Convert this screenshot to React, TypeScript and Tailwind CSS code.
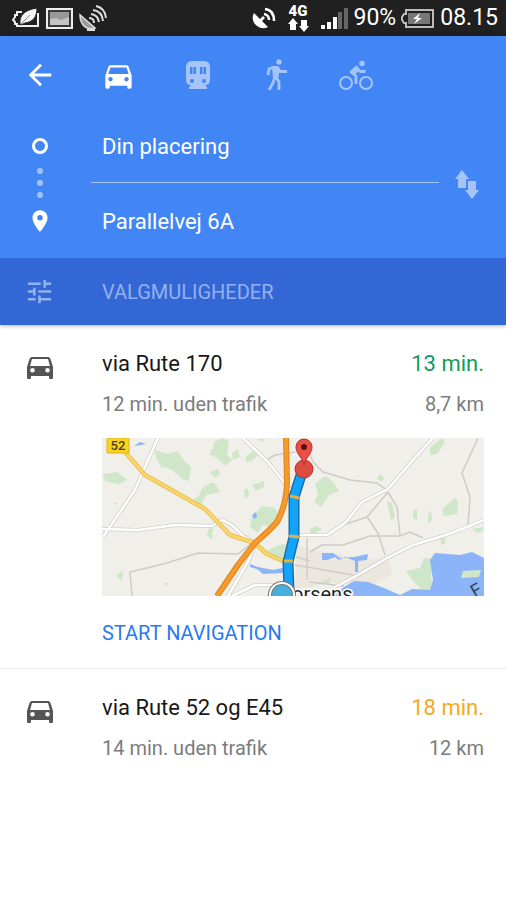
import type { ReactNode } from 'react'
import { MdArrowBack, MdDirectionsCar, MdPlace, MdTune } from 'react-icons/md'

function StatusBar() {
  return (
    <div className="flex h-9 items-center justify-between bg-[#202020] pl-3 pr-2 text-white">
      <div className="flex items-center gap-1.5">
        {/* Power saver */}
        <svg viewBox="0 0 28 22" className="h-[22px] w-7" fill="none" aria-hidden="true">
          <path d="M10 5H5v3H3v2L1 13l2 2v2h2v2h21V6" stroke="#eee" strokeWidth="2" />
          <path d="M8 17C7 9 12 3 25 1c0 9-4 14-12 15l-4 2z" fill="#f2f2f2" stroke="#202020" />
          <path d="M9 17l9-9" stroke="#888" />
        </svg>
        {/* Screenshot saved */}
        <svg viewBox="0 0 27 21" className="h-[21px] w-[27px]" aria-hidden="true">
          <rect x="1" y="1" width="25" height="19" fill="#3a3a3a" stroke="#eee" strokeWidth="2" />
          <rect x="4" y="4" width="19" height="13" fill="#999" />
          <path d="M4 11l6-1 5 2 8-3v8H4z" fill="#c4c4c4" />
        </svg>
        <svg viewBox="0 0 28 28" className="size-7" fill="none" aria-hidden="true">
          <path d="M1 11c0 10 7 16 15 13z" fill="#999" stroke="#ddd" strokeWidth="1.500" />
          <path d="M8 26h8" stroke="#ddd" strokeWidth="2" />
          <path d="M10 14q5 0 5 5M12 10q7 1 8 8M14 6q9 1 10 11M17 2q9 2 10 12" stroke="#ddd" strokeWidth="2" />
        </svg>
      </div>
      <div className="flex items-center">
        <svg viewBox="0 0 25 24" className="mr-3 h-6 w-[25px]" fill="none" aria-hidden="true">
          <path d="M3 7c-5 8 5 19 14 14l-6-6 3-3-2-2-3 3z" fill="#fff" />
          <path d="M13 8q5 1 5 6M14 3q9 1 9 12" stroke="#fff" strokeWidth="2.500" />
        </svg>
        <div className="mr-3 flex w-[21px] flex-col items-center">
          <span className="text-[15px] font-black leading-[14px]">4G</span>
          <svg viewBox="0 0 21 14" className="h-3.5 w-[21px]" fill="#fff" aria-hidden="true">
            <path d="M5 0l5 6H8v6H2V6H0zM16 14l-5-6h2V2h6v6h2z" />
          </svg>
        </div>
        <svg viewBox="0 0 27 22" className="mr-1.5 h-[22px] w-[27px]" fill="#fff" aria-hidden="true">
          <path d="M0 18h4v4H0zM6 15h4v7H6zM12 10h4v12h-4z" />
          <path d="M17 5h4v17h-4zM23 1h4v21h-4z" fill="#666" />
        </svg>
        <span className="mr-1 text-[23px] leading-9">90%</span>
        <svg viewBox="0 0 34 19" className="mr-1.5 h-[19px] w-[34px]" fill="none" aria-hidden="true">
          <path d="M6 1h27v17H6v-4H4l-2-3V8l2-3h2z" stroke="#bbb" strokeWidth="2" />
          <path d="M8 4h22v11H8z" fill="#777" />
          <path d="M20 4l-7 6h4l-3 5 8-6h-4z" fill="#fff" />
        </svg>
        <span className="text-[23px] leading-9">08.15</span>
      </div>
    </div>
  )
}

function TransitIcon() {
  return (
    <svg viewBox="0 0 24 28" className="h-7 w-6" fill="currentColor" aria-hidden="true">
      <path
        fillRule="evenodd"
        d="M6 0h12q6 0 6 6v13q0 5-5 5l2 2v2H3v-2l2-2q-5 0-5-5V6q0-6 6-6zM4 6v7h6V6zM14 6v7h6V6zM6 18a2 2 0 1 0 0 4 2 2 0 1 0 0-4zM18 18a2 2 0 1 0 0 4 2 2 0 1 0 0-4z"
      />
      <path d="M6.500 6h1v7h-1zM16.500 6h1v7h-1z" />
    </svg>
  )
}

function WalkIcon() {
  return (
    <svg viewBox="0 0 24 36" className="h-9 w-6" fill="none" stroke="currentColor" aria-hidden="true">
      <circle cx="14" cy="5" r="2.700" fill="currentColor" stroke="none" />
      <path d="M7 9h5l3 2-2 11H8z" fill="currentColor" stroke="none" />
      <path d="M9 10l-5 2-1 6M12 10l3 4.500h7M10 20l-2 6-4 7M11 20l3 5v8" strokeWidth="2.800" />
    </svg>
  )
}

function BikeIcon() {
  return (
    <svg viewBox="0 0 36 32" className="h-8 w-9" fill="none" stroke="currentColor" aria-hidden="true">
      <circle cx="8" cy="24" r="6" strokeWidth="2" />
      <circle cx="28" cy="24" r="6" strokeWidth="2" />
      <circle cx="24" cy="4.500" r="2.700" fill="currentColor" stroke="none" />
      <path d="M27.500 12.500H22L18.500 8 13 13l5 4v8" strokeWidth="2.800" strokeLinejoin="round" />
      <path d="M13 13l5-5 3 3-4 4z" fill="currentColor" />
    </svg>
  )
}

function ResultCarIcon() {
  return (
    <svg viewBox="0 0 26 24" className="h-6 w-[26px]" aria-hidden="true">
      <path
        fill="#555"
        fillRule="evenodd"
        d="M5 1h16q2 0 2.500 2L26 11v11q0 1-1 1h-2q-1 0-1-1v-2H4v2q0 1-1 1H1q-1 0-1-1V11l2.500-8Q3 1 5 1zM5 3l-2 7h20L21 3zM5.500 12a2.300 2.300 0 1 0 0 4.600 2.300 2.300 0 1 0 0-4.600zM20.500 12a2.300 2.300 0 1 0 0 4.600 2.300 2.300 0 1 0 0-4.600z"
      />
    </svg>
  )
}

const modes = [
  { label: 'Bil', icon: <MdDirectionsCar className="size-[35px]" />, color: 'text-white' },
  { label: 'Offentlig transport', icon: <TransitIcon />, color: 'text-[#a5c4fa]' },
  { label: 'Gang', icon: <WalkIcon />, color: 'text-[#a5c4fa]' },
  { label: 'Cykel', icon: <BikeIcon />, color: 'text-[#a5c4fa]' },
]

function Header() {
  return (
    <header className="bg-[#4285f4] text-white shadow-[0_1px_4px_rgba(0,0,0,0.3)]">
      <nav className="flex h-[74px] items-center pt-1">
        <button aria-label="Tilbage" className="flex w-[79px] justify-center">
          <MdArrowBack className="size-[34px]" />
        </button>
        {modes.map((m) => (
          <button key={m.label} aria-label={m.label} className={`flex w-[79px] justify-center ${m.color}`}>
            {m.icon}
          </button>
        ))}
      </nav>

      <div className="flex">
        <div className="mr-3 flex w-[79px] shrink-0 flex-col items-center pt-7">
          <span className="size-4 rounded-full border-[3px] border-white" />
          <div className="flex flex-col gap-1.5 pt-3.5 pb-2.5">
            <span className="size-1.5 rounded-full bg-[#a5c4fa]" />
            <span className="size-1.5 rounded-full bg-[#a5c4fa]" />
            <span className="size-1.5 rounded-full bg-[#a5c4fa]" />
          </div>
          <MdPlace className="size-[26px]" />
        </div>
        <div className="min-w-0 flex-1">
          <input
            aria-label="Fra"
            defaultValue="Din placering"
            className="block h-[72px] w-full px-[11px] text-[22px] outline-none"
          />
          <div className="h-px bg-[#a5c4fa]" />
          <input
            aria-label="Til"
            defaultValue="Parallelvej 6A"
            className="block h-[75px] w-full px-[11px] pt-0.5 text-[22px] outline-none"
          />
        </div>
        <button aria-label="Byt om" className="flex w-[67px] shrink-0 items-center pl-[15px] text-[#a5c4fa]">
          <svg viewBox="0 0 26 30" className="h-[30px] w-[26px]" fill="currentColor" aria-hidden="true">
            <path d="M8 1l7 9h-3v9H4v-9H1zM18 30l-7-9h3v-9h8v9h3z" />
          </svg>
        </button>
      </div>

      <button className="flex h-[67px] w-full items-center bg-[#3367d6] text-[#93b1ee]">
        <span className="mr-[23px] flex w-[79px] justify-center">
          <MdTune className="size-[31px]" />
        </span>
        <span className="text-[20px]">VALGMULIGHEDER</span>
      </button>
    </header>
  )
}

function RouteMap() {
  return (
    <svg
      viewBox="0 0 382 158"
      preserveAspectRatio="xMidYMid slice"
      className="mt-[18px] block h-[158px] w-full bg-[#f0efe9]"
      fill="none"
      role="img"
      aria-label="Kort over ruten"
    >
      {/* Built-up area */}
      <path d="M195 106l14 6 26 4 30 6 22-4 3 18-20 12-40-4-25 6h-12z" fill="#ebe7df" />

      {/* Woods */}
      <g fill="#d0e6c8">
        <path d="M52 12l14 4 10-3 8 12 5 4-2 14-7-2-10-9-12-5-4-8zM112 4l8-4 7 3-2 14 5 5-7 6-8-8-8-4 4-6z" />
        <path d="M1 36l14-2 10 8-8 4-14-3zM100 50l10-6 4 3 4 7-14 3-4 8 4 6-10-3-2-6 6-6z" />
        <path d="M108 34l8-3 2 5-6 4zM130 15l6-4 2 8-7 3zM144 18l7-5 5 4-6 6-6 1zM142 52l4-2 1 8-4 2z" />
        <path d="M150 79l10-11 13 2 4 9-8 10-8-2-5 8-8-6zM162 114l18-8 10 2v14l-18-2zM150 47l12-4v6l-8 4z" />
        <path d="M106 92l5-4-1 13-5-3zM15 136l6-3-1 10-4-3zM11 65l5-1-2 3zM58 26l5 1-3 3zM62 145h5l-3 3zM154 1h9l-3 3z" />
        <path d="M213 46l10-8 6 4 8 11-10 4-8 12-7-5 4-8zM275 40l4-4 3 5-3 3zM285 63l5 2 3 14-4 4z" />
        <path d="M328 10l12-10 3 4-8 12-7 1zM341 70l12-10 3 4-1 12-14 2zM311 73l4-2v11l-4-2zM326 76l3-4 1 10-4 4z" />
        <path d="M304 133l14-3 4-10 9 1-2 18 2 12-10 2-10-10zM338 98l6-1-1 9-4 1zM208 91l6-3 6 3-6 4h-6zM370 91l12-2-1 4-6 2zM223 142l6-3-2 7-7-1z" />
      </g>

      {/* Water */}
      <g fill="#8cb4f8">
        <path d="M328 122l5-7 25 2 12-3 12 6v38H232l10-9 10-6 14 1 16 6 16 7 12-6 18 1 3-10z" />
        <path d="M220 115h11l7 5 14-1 14-3-1 6-9 1v11h-3v-11l-10-4-6 3-4-3-8 3h-5z" />
        <path d="M148 126l8 3 15 3 10-2v5l-20 1-6-5-7-2zM32 8l6-4 6 2-5 1zM150 77l4-3 1 5-3 2z" />
      </g>
      <path d="M361 133l18-1-2 7-18 1z" fill="#d0e6c8" />

      {/* Minor roads */}
      <g stroke="#cfccc7" strokeWidth="1.500" strokeLinejoin="round">
        <path d="M30 158l-2-24 37-9 31-10 40 1 14-11M165 22l8-5 20-3" />
        <path d="M207 14l4 10 10 10 27 8 27 3 10 7M286 54l9 15 3 28M286 54l-21 25 11 16 7 22M265 79l-24 8" />
        <path d="M208 114l12-7h21l27-9h30l10-4 13 6M376 0l-16 35 8 24-2 28" />
        <path d="M205 100v42M193 127l58 10M207 144l35 4M194 119l14 4" />
      </g>

      {/* Main roads, grey casing under a white centre */}
      <g stroke="#d2cfca" strokeWidth="4">
        <path d="M56 0L43 29 33 52 1 99M0 91l36 1 37-5 37 1 10-6 10 5 10 10 13 8M141 0l25 24 24 30M126 158l20-34 7-18M130 158l23-11h27" />
        <path d="M331 0l-20 22-25 29-26 13-17 21-18 12h-29M382 82l-17 7-24 9-30 9-26 13-29 17-25 13" />
      </g>
      <g stroke="#fff" strokeWidth="2.500">
        <path d="M56 0L43 29 33 52 1 99M0 91l36 1 37-5 37 1 10-6 10 5 10 10 13 8M141 0l25 24 24 30M126 158l20-34 7-18M130 158l23-11h27" />
        <path d="M331 0l-20 22-25 29-26 13-17 21-18 12h-29M382 82l-17 7-24 9-30 9-26 13-29 17-25 13" />
      </g>

      {/* Highways */}
      <g strokeLinejoin="round">
        <path d="M23 14l20 23 30 17 30 17 25 26 25 8 12 11 16 7h9" stroke="#e6bd50" strokeWidth="4.500" />
        <path d="M23 14l20 23 30 17 30 17 25 26 25 8 12 11 16 7h9" stroke="#fbd567" strokeWidth="3" />
        <path d="M184 0l1 42q0 24-10 42-8 9-22 21l-17 22-21 31" stroke="#dc8420" strokeWidth="6" />
        <path d="M184 0l1 42q0 24-10 42-8 9-22 21l-17 22-21 31" stroke="#f79a2b" strokeWidth="4" />
      </g>

      <rect x="5" y="0" width="22" height="15" rx="1" fill="#fcd221" stroke="#d9b520" />
      <text x="16" y="12" textAnchor="middle" className="font-['Roboto'] text-[13px] font-medium" fill="#4a3f10">
        52
      </text>

      <text x="190" y="163" className="font-['Roboto'] text-[20px]" fill="#222" stroke="#fff" strokeWidth="3" paintOrder="stroke">
        orsens
      </text>
      <text x="373" y="160" transform="rotate(-30 373 160)" className="font-['Roboto'] text-[18px]" fill="#345">
        F
      </text>

      {/* Selected route */}
      <g strokeLinejoin="round">
        <path d="M200 34l-8 25v40l-6 25 1 30" stroke="#1c6ea8" strokeWidth="11" />
        <path d="M200 34l-8 25v40l-6 25 1 30" stroke="#12a4fa" strokeWidth="8" />
        <path d="M188 58l9 2M187 98l10 1M182 123h9" stroke="#e0b04c" strokeWidth="3" />
      </g>
      <path d="M165 158l8-10 6-4 6 4" fill="#4a5a68" />
      <circle cx="180" cy="157" r="12" fill="#45b0dc" stroke="#777" strokeWidth="4" />
      <circle cx="180" cy="157" r="12" stroke="#fff" strokeWidth="2" />

      {/* Destination */}
      <circle cx="202" cy="31" r="9" fill="#dd4b43" stroke="#b8322c" />
      <path d="M202 27c-1-7-8-11-8-18a8 8 0 0 1 16 0c0 7-7 11-8 18z" fill="#ea4f45" stroke="#b8322c" />
      <circle cx="202" cy="9" r="3" fill="#58120f" />
    </svg>
  )
}

type RouteProps = {
  name: string
  detail: string
  time: string
  distance: string
  timeColor: string
  children?: ReactNode
}

function Route({ name, detail, time, distance, timeColor, children }: RouteProps) {
  return (
    <section className="flex pt-[23px] pr-[22px]">
      <div className="mr-[23px] flex w-[79px] shrink-0 justify-center pt-2">
        <ResultCarIcon />
      </div>
      <div className="min-w-0 flex-1">
        <div className="flex justify-between text-[22px] leading-8">
          <h2 className="text-[#181818]">{name}</h2>
          <span className={timeColor}>{time}</span>
        </div>
        <div className="mt-2 flex justify-between text-[20px] leading-8 text-[#7c7c7c]">
          <span>{detail}</span>
          <span>{distance}</span>
        </div>
        {children}
      </div>
    </section>
  )
}

export default function App() {
  return (
    <div className="min-h-screen bg-white font-['Roboto',sans-serif]">
      <StatusBar />
      <Header />
      <main>
        <Route
          name="via Rute 170"
          detail="12 min. uden trafik"
          time="13 min."
          distance="8,7 km"
          timeColor="text-[#0f9d58]"
        >
          <RouteMap />
          <button className="h-[72px] pt-0.5 text-[20px] text-[#2979f2]">START NAVIGATION</button>
        </Route>
        <hr className="border-[#ececec]" />
        <Route
          name="via Rute 52 og E45"
          detail="14 min. uden trafik"
          time="18 min."
          distance="12 km"
          timeColor="text-[#f4a822]"
        />
      </main>
    </div>
  )
}
